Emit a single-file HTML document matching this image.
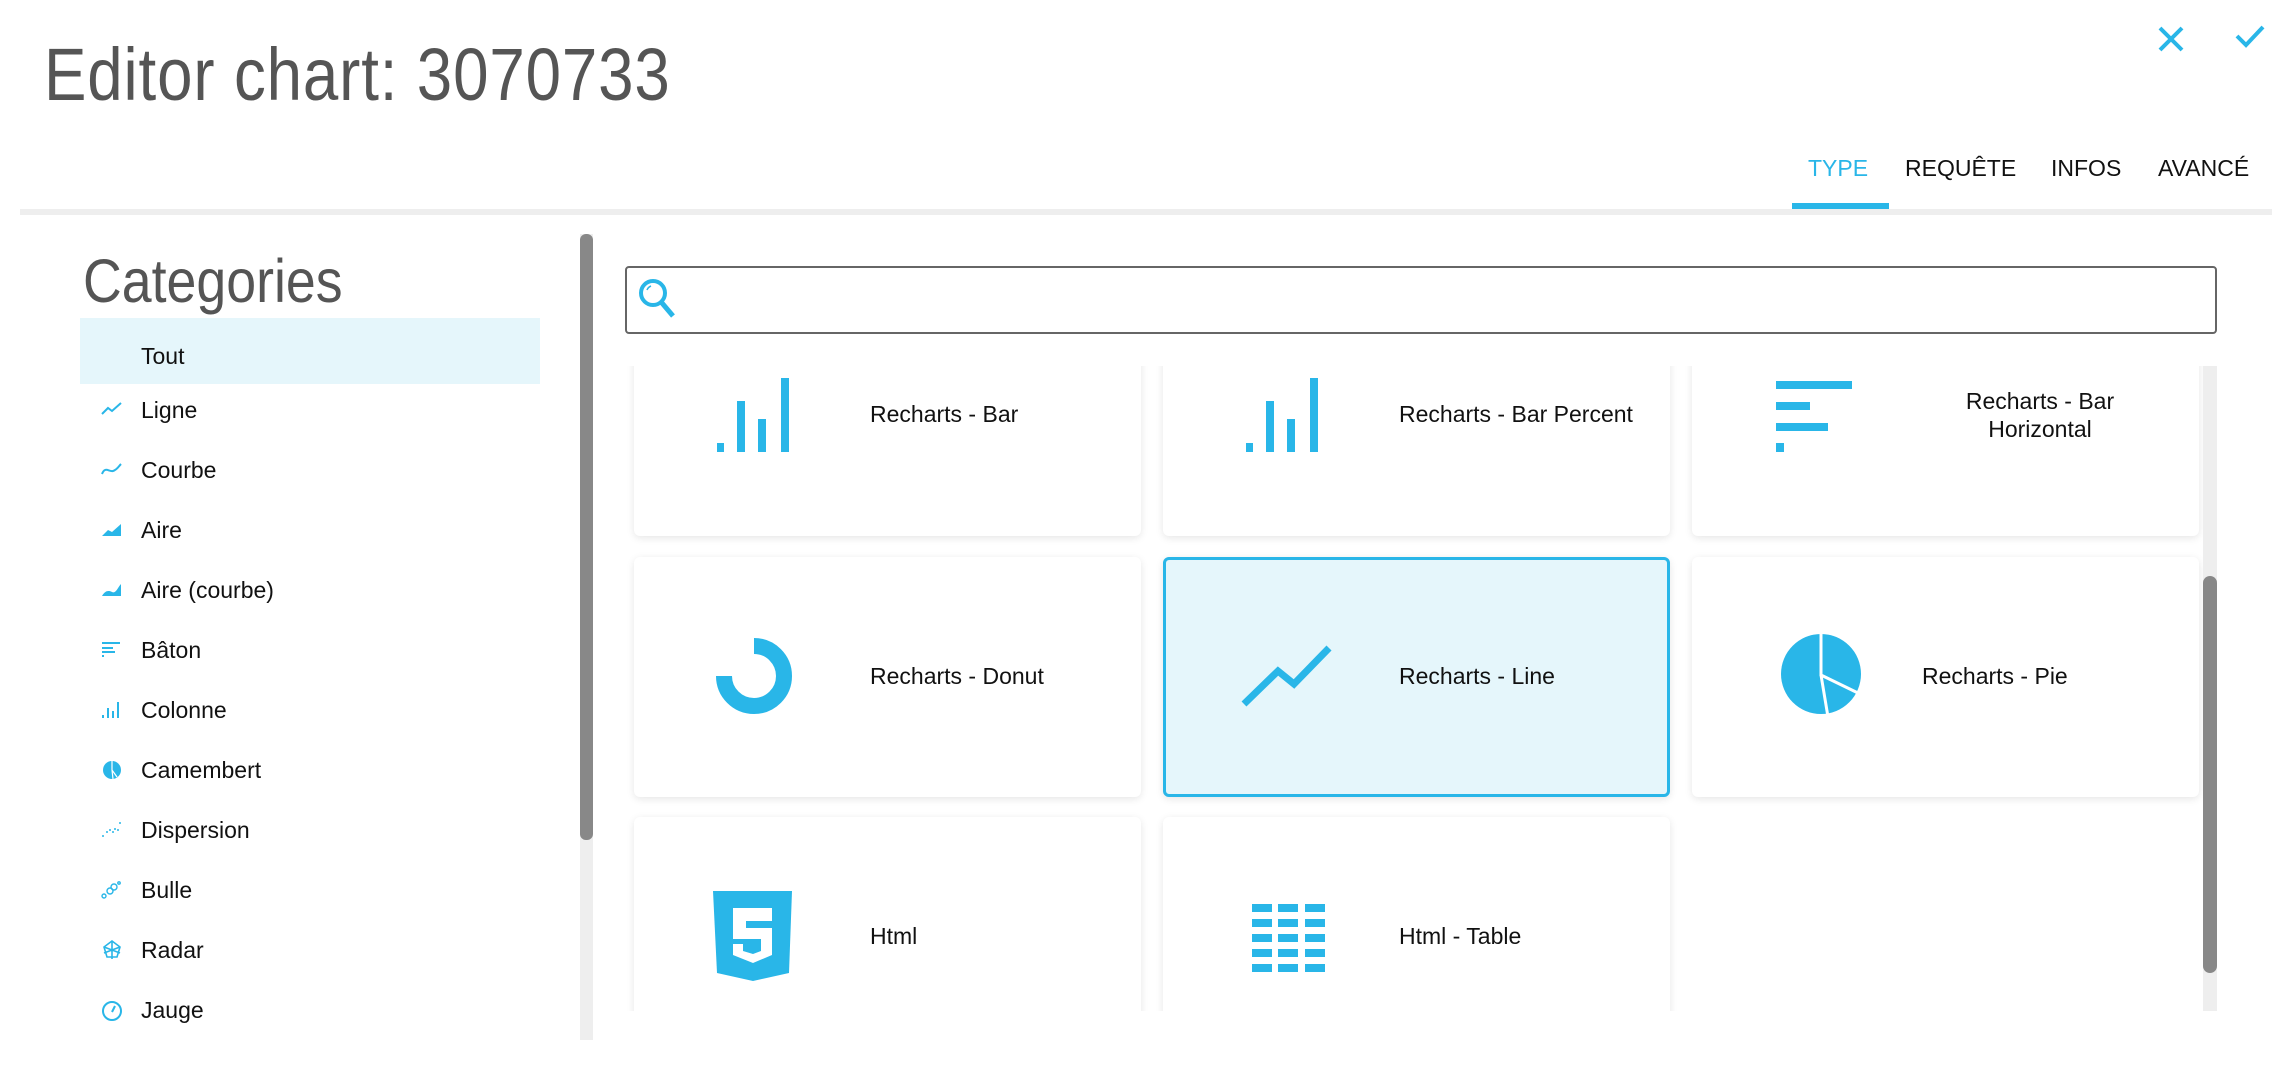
<!DOCTYPE html>
<html><head><meta charset="utf-8"><style>
*{margin:0;padding:0;box-sizing:border-box}
html{overflow:hidden}
body{width:2288px;height:1082px;background:#fff;position:relative;overflow:hidden;font-family:"Liberation Sans",Arial,sans-serif;color:#111}
.a{position:absolute}
.title{left:44px;top:32px;font-size:74px;color:#555;white-space:nowrap;transform:scaleX(0.86);transform-origin:left top;letter-spacing:1px}
.tab{top:155px;font-size:23px;color:#111}
.cat{left:83px;top:246px;font-size:61px;color:#555;transform:scaleX(0.88);transform-origin:left top;white-space:nowrap}
.item{left:80px;width:460px;height:60px;font-size:23px;line-height:60px}
.item span{position:absolute;left:61px}
.item svg{position:absolute;left:21px;top:20px}
.card{position:absolute;width:507px;height:240px;background:#fff;border-radius:6px;box-shadow:0 2px 8px rgba(0,0,0,0.10)}
.lbl{position:absolute;font-size:23px;color:#111;white-space:nowrap}
</style></head><body>
<div class="a title">Editor chart: 3070733</div>
<svg class="a" style="left:2156px;top:24px" width="30" height="30" viewBox="0 0 30 30"><path d="M4 4L26 26M26 4L4 26" stroke="#29b6e8" stroke-width="4"/></svg>
<svg class="a" style="left:2234px;top:24px" width="32" height="26" viewBox="0 0 32 26"><path d="M3 12L12 21L29 3" stroke="#29b6e8" stroke-width="4" fill="none"/></svg>

<div class="a tab" style="left:1808px;color:#29b6e8">TYPE</div>
<div class="a tab" style="left:1905px">REQUÊTE</div>
<div class="a tab" style="left:2051px">INFOS</div>
<div class="a tab" style="left:2158px">AVANCÉ</div>
<div class="a" style="left:1792px;top:203px;width:97px;height:6px;background:#29b6e8"></div>
<div class="a" style="left:20px;top:209px;width:2252px;height:6px;background:#eee"></div>

<div class="a cat">Categories</div>
<div class="a item" style="top:318px;height:66px;background:#e5f6fb;line-height:76px"><span>Tout</span></div>
<div class="a item" style="top:380px"><svg width="22" height="20" viewBox="0 0 22 20"><path d="M1 14L7 8L11 11L20 3" stroke="#29b6e8" stroke-width="2" fill="none"/></svg><span>Ligne</span></div>
<div class="a item" style="top:440px"><svg width="22" height="20" viewBox="0 0 22 20"><path d="M1 14C4 6 8 12 12 11S18 6 20 4" stroke="#29b6e8" stroke-width="2" fill="none"/></svg><span>Courbe</span></div>
<div class="a item" style="top:500px"><svg width="22" height="20" viewBox="0 0 22 20"><path d="M1 16L7 10L11 12L20 4V16Z" fill="#29b6e8"/></svg><span>Aire</span></div>
<div class="a item" style="top:560px"><svg width="22" height="20" viewBox="0 0 22 20"><path d="M1 16C4 11 7 10 11 12S17 7 20 4V16Z" fill="#29b6e8"/></svg><span>Aire (courbe)</span></div>
<div class="a item" style="top:620px"><svg width="22" height="20" viewBox="0 0 22 20"><path d="M1 3H19M1 8H12M1 12H14M1 16H3" stroke="#29b6e8" stroke-width="2"/></svg><span>Bâton</span></div>
<div class="a item" style="top:680px"><svg width="22" height="20" viewBox="0 0 22 20"><path d="M2 18V15M7 18V8M12 18V11M17 18V2" stroke="#29b6e8" stroke-width="2"/></svg><span>Colonne</span></div>
<div class="a item" style="top:740px"><svg width="22" height="20" viewBox="0 0 22 20"><circle cx="11" cy="10" r="9" fill="#29b6e8"/><path d="M11 1V10L16 17M11 10L12 19" stroke="#fff" stroke-width="1.2" fill="none"/></svg><span>Camembert</span></div>
<div class="a item" style="top:800px"><svg width="22" height="20" viewBox="0 0 22 20" fill="#29b6e8"><circle cx="2" cy="16" r="1"/><circle cx="6" cy="12" r="1"/><circle cx="9" cy="10" r="1"/><circle cx="12" cy="12" r="1"/><circle cx="14" cy="9" r="1"/><circle cx="17" cy="10" r="1"/><circle cx="19" cy="3" r="1"/></svg><span>Dispersion</span></div>
<div class="a item" style="top:860px"><svg width="22" height="20" viewBox="0 0 22 20" fill="none" stroke="#29b6e8" stroke-width="1.4"><circle cx="3" cy="16" r="2"/><circle cx="9" cy="11" r="3"/><circle cx="13" cy="7" r="3"/><circle cx="18" cy="3" r="1.2"/></svg><span>Bulle</span></div>
<div class="a item" style="top:920px"><svg width="22" height="20" viewBox="0 0 22 20" fill="none" stroke="#29b6e8" stroke-width="1.6"><path d="M11 1L19 7L16 17H6L3 7Z"/><path d="M11 1V19M3 7L19 13M19 7L3 13"/></svg><span>Radar</span></div>
<div class="a item" style="top:980px"><svg width="22" height="22" viewBox="0 0 22 22" fill="none" stroke="#29b6e8" stroke-width="2"><circle cx="11" cy="11" r="9"/><path d="M11 12L14 6"/></svg><span>Jauge</span></div>

<div class="a" style="left:580px;top:234px;width:13px;height:806px;background:#eee"></div>
<div class="a" style="left:580px;top:234px;width:13px;height:606px;background:#888;border-radius:6px"></div>

<div class="a" style="left:625px;top:266px;width:1592px;height:68px;border:2px solid #666;border-radius:4px"></div>
<svg class="a" style="left:637px;top:276px" width="42" height="46" viewBox="0 0 42 46"><circle cx="16" cy="17" r="12" stroke="#29b6e8" stroke-width="4" fill="none"/><path d="M25 27L36 40" stroke="#29b6e8" stroke-width="5"/><path d="M10 14A7 7 0 0 1 14 10" stroke="#29b6e8" stroke-width="1.5" fill="none"/></svg>

<div class="a" style="left:625px;top:366px;width:1590px;height:645px;overflow:hidden">
 <div style="position:absolute;left:-625px;top:-366px;width:2288px;height:1082px">
  <div class="card" style="left:634px;top:296px"></div>
  <div class="card" style="left:1163px;top:296px"></div>
  <div class="card" style="left:1692px;top:296px"></div>
  <div class="card" style="left:634px;top:557px"></div>
  <div class="card" style="left:1163px;top:557px;background:#e5f6fb;border:3px solid #29b6e8"></div>
  <div class="card" style="left:1692px;top:557px"></div>
  <div class="card" style="left:634px;top:817px"></div>
  <div class="card" style="left:1163px;top:817px"></div>

  <svg class="a" style="left:700px;top:370px" width="100" height="90"><g fill="#29b6e8"><rect x="17" y="73" width="7" height="9"/><rect x="37" y="31" width="8" height="51"/><rect x="58" y="49" width="8" height="33"/><rect x="81" y="8" width="8" height="74"/></g></svg>
  <div class="lbl" style="left:870px;top:401px">Recharts - Bar</div>
  <svg class="a" style="left:1229px;top:370px" width="100" height="90"><g fill="#29b6e8"><rect x="17" y="73" width="7" height="9"/><rect x="37" y="31" width="8" height="51"/><rect x="58" y="49" width="8" height="33"/><rect x="81" y="8" width="8" height="74"/></g></svg>
  <div class="lbl" style="left:1399px;top:401px">Recharts - Bar Percent</div>
  <svg class="a" style="left:1770px;top:375px" width="90" height="85"><g fill="#29b6e8"><rect x="6" y="6" width="76" height="8"/><rect x="6" y="27" width="34" height="8"/><rect x="6" y="48" width="52" height="8"/><rect x="6" y="68" width="8" height="9"/></g></svg>
  <div class="lbl" style="left:1940px;top:387px;width:200px;text-align:center;line-height:28px;white-space:normal">Recharts - Bar Horizontal</div>

  <svg class="a" style="left:710px;top:631px" width="90" height="90"><path d="M44 15A30 30 0 1 1 14 45" stroke="#29b6e8" stroke-width="16" fill="none"/></svg>
  <div class="lbl" style="left:870px;top:663px">Recharts - Donut</div>
  <svg class="a" style="left:1240px;top:640px" width="95" height="70"><path d="M4 64L38 31L54 44L89 8" stroke="#29b6e8" stroke-width="7" fill="none"/></svg>
  <div class="lbl" style="left:1399px;top:663px">Recharts - Line</div>
  <svg class="a" style="left:1776px;top:629px" width="90" height="90"><circle cx="45" cy="45" r="40" fill="#29b6e8"/><path d="M45 2V46L82 64M45 46L52 88" stroke="#fff" stroke-width="3" fill="none"/></svg>
  <div class="lbl" style="left:1922px;top:663px">Recharts - Pie</div>

  <svg class="a" style="left:713px;top:891px" width="80" height="90" viewBox="0 0 80 90"><path d="M0 0H79L76 82L40 90L4 82Z" fill="#29b6e8"/><path d="M20 17H59V30H33V37H59V64L40 72L20 64V53H30V60L40 63L48 60V48H20Z" fill="#fff"/></svg>
  <div class="lbl" style="left:870px;top:923px">Html</div>
  <svg class="a" style="left:1252px;top:904px" width="75" height="72"><g fill="#29b6e8"><rect x="0" y="0" width="20" height="8"/><rect x="26" y="0" width="20" height="8"/><rect x="53" y="0" width="20" height="8"/><rect x="0" y="15" width="20" height="8"/><rect x="26" y="15" width="20" height="8"/><rect x="53" y="15" width="20" height="8"/><rect x="0" y="30" width="20" height="8"/><rect x="26" y="30" width="20" height="8"/><rect x="53" y="30" width="20" height="8"/><rect x="0" y="45" width="20" height="8"/><rect x="26" y="45" width="20" height="8"/><rect x="53" y="45" width="20" height="8"/><rect x="0" y="60" width="20" height="8"/><rect x="26" y="60" width="20" height="8"/><rect x="53" y="60" width="20" height="8"/></g></svg>
  <div class="lbl" style="left:1399px;top:923px">Html - Table</div>
 </div>
</div>
<div class="a" style="left:2203px;top:366px;width:14px;height:645px;background:#eee"></div>
<div class="a" style="left:2203px;top:576px;width:14px;height:397px;background:#888;border-radius:7px"></div>
</body></html>
